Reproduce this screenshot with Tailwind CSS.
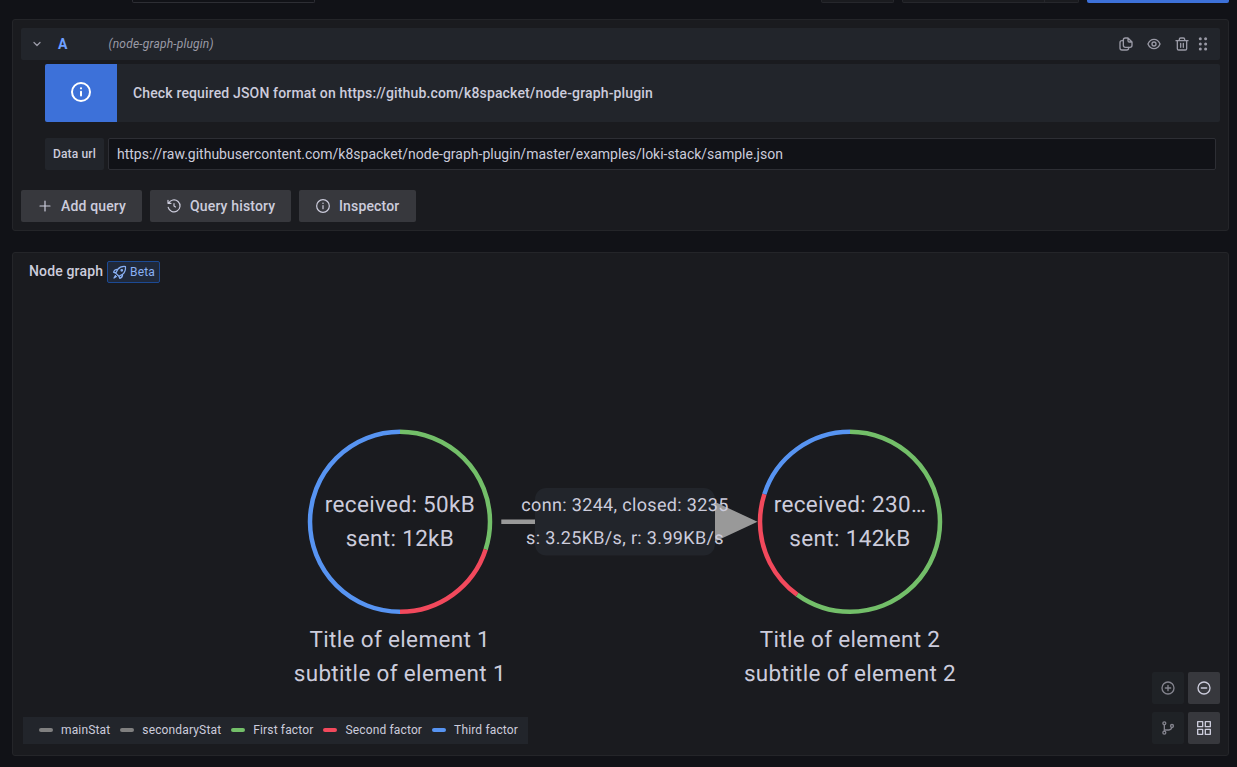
<!DOCTYPE html>
<html lang="en">
<head>
<meta charset="utf-8">
<title>Node graph</title>
<script src="https://cdn.jsdelivr.net/npm/@tailwindcss/browser@4"></script>
</head>
<body class="h-[767px] w-[1237px] overflow-hidden bg-[#111217] font-[Roboto,sans-serif] text-[14px] leading-[22px] tracking-[0.15px] text-[#ccccdc] antialiased">
<div class="flex h-full flex-col pr-[8px] pl-[12px]">
  <header class="flex h-[3px] shrink-0">
    <div class="ml-[120px] w-[183px] rounded-b-[2px] border border-t-0 border-[#2d2e34] bg-[#111217]"></div>
    <div class="ml-auto w-[73px] rounded-b-[2px] border border-t-0 border-[#26272c] bg-[#1a1b1f]"></div>
    <div class="ml-[8px] flex w-[177px] rounded-b-[2px] border border-t-0 border-[#26272c] bg-[#1a1b1f]"><div class="w-[142px] border-r border-[#26272c]"></div></div>
    <div class="ml-[8px] w-[142px] rounded-b-[2px] bg-[#3d71d9]"></div>
  </header>

  <section class="mt-[16px] flex h-[212px] shrink-0 flex-col rounded-[3px] border border-[#242529] bg-[#1a1b1f] px-[8px] pt-[8px]">
    <div class="flex h-[32px] items-center rounded-[2px] bg-[#22252b] pr-[9px] pl-[8px] text-[#9a9aa6]">
      <svg class="size-4" viewBox="0 0 16 16" fill="none" stroke="currentColor" stroke-width="1.3" stroke-linecap="round" stroke-linejoin="round"><path d="M5 6.5l3 3 3-3"/></svg>
      <span class="ml-[13px] font-bold text-[#6e9fff]">A</span>
      <span class="ml-[41px] text-[12px] tracking-[0.2px] italic">(node-graph-plugin)</span>
      <div class="ml-auto flex items-center">
        <svg class="size-4" viewBox="0 0 24 24" fill="none" stroke="currentColor" stroke-width="2" stroke-linejoin="round" stroke-linecap="round"><path d="M15 3h-4a3 3 0 0 0-3 3v8a3 3 0 0 0 3 3h7a3 3 0 0 0 3-3V9zM15 3v4a2 2 0 0 0 2 2h4"/><path d="M8 7H6a3 3 0 0 0-3 3v8a3 3 0 0 0 3 3h7a3 3 0 0 0 3-3v-1"/></svg>
        <svg class="ml-[12px] size-4" viewBox="0 0 24 24" fill="none" stroke="currentColor" stroke-width="2"><path d="M3.100 11.600C5 7.300 8.300 5 12 5s7 2.300 8.900 6.600a1 1 0 0 1 0 .8C19 16.700 15.700 19 12 19s-7-2.300-8.900-6.600a1 1 0 0 1 0-.8z"/><circle cx="12" cy="12" r="3"/></svg>
        <svg class="ml-[12px] size-4" viewBox="0 0 24 24" fill="none" stroke="currentColor" stroke-width="2" stroke-linecap="round" stroke-linejoin="round"><path d="M3 7h18M8 7V5a2 2 0 0 1 2-2h4a2 2 0 0 1 2 2v2M5 7v12a2 2 0 0 0 2 2h10a2 2 0 0 0 2-2V7M10 11v6M14 11v6"/></svg>
        <svg class="ml-[5px] size-4" viewBox="0 0 16 16" fill="currentColor"><circle cx="5.300" cy="2.700" r="1.500"/><circle cx="10.600" cy="2.700" r="1.500"/><circle cx="5.300" cy="7.900" r="1.500"/><circle cx="10.600" cy="7.900" r="1.500"/><circle cx="5.300" cy="13.100" r="1.500"/><circle cx="10.600" cy="13.100" r="1.500"/></svg>
      </div>
    </div>

    <div class="mt-[4px] ml-[24px] flex h-[58px] items-center overflow-hidden rounded-[2px] bg-[#22252b]">
      <div class="flex h-full w-[72px] items-center justify-center bg-[#3d71d9] text-white">
        <svg class="mb-[2px] size-6" viewBox="0 0 24 24" fill="none" stroke="currentColor" stroke-width="2" stroke-linecap="round"><circle cx="12" cy="12" r="9"/><path d="M12 11.800v3.700"/><circle cx="12" cy="8.300" r="1.100" fill="currentColor" stroke="none"/></svg>
      </div>
      <span class="ml-[16px] font-medium">Check required JSON format on https://github.com/k8spacket/node-graph-plugin</span>
    </div>

    <div class="mt-[16px] mr-[4px] ml-[24px] flex h-[32px] gap-[4px]">
      <label class="flex w-[59px] items-center rounded-[2px] bg-[#22252b] pl-[8px] text-[12px] font-medium whitespace-nowrap">Data url</label>
      <div class="flex flex-1 items-center rounded-[2px] border border-[#2d2e34] bg-[#111217] pl-[8px] tracking-normal">https://raw.githubusercontent.com/k8spacket/node-graph-plugin/master/examples/loki-stack/sample.json</div>
    </div>

    <div class="mt-[20px] flex h-[32px] gap-[8px] font-medium">
      <button class="flex w-[121px] items-center rounded-[2px] bg-[#37383d] pl-[16px]">
        <svg class="mr-[8px] size-4" viewBox="0 0 16 16" stroke="currentColor" stroke-width="1.200" stroke-linecap="round"><path d="M8 3v10M3 8h10"/></svg>Add query</button>
      <button class="flex w-[141px] items-center rounded-[2px] bg-[#37383d] pl-[16px]">
        <svg class="mr-[8px] size-4" viewBox="0 0 24 24" fill="none" stroke="currentColor" stroke-width="1.800" stroke-linecap="round" stroke-linejoin="round"><path d="M3 3.500V8h4.500M3.900 8a9 9 0 1 1-.6 6M12 8.500V12l2.200 1.400"/></svg>Query history</button>
      <button class="flex w-[117px] items-center rounded-[2px] bg-[#37383d] pl-[16px]">
        <svg class="mr-[8px] size-4" viewBox="0 0 24 24" fill="none" stroke="currentColor" stroke-width="1.800" stroke-linecap="round"><circle cx="12" cy="12" r="9.500"/><path d="M12 11.500v4.500"/><circle cx="12" cy="8" r="1.100" fill="currentColor" stroke="none"/></svg>Inspector</button>
    </div>
  </section>

  <section class="relative mt-[21px] h-[504px] shrink-0 rounded-[3px] border border-[#242529] bg-[#1a1b1f]">
    <div class="flex items-center pt-[7px] pl-[16px]">
      <h2 class="mb-[2px] font-medium">Node graph</h2>
      <span class="ml-[4px] flex h-[22px] w-[53px] items-center rounded-[2px] border border-[#1c4a94] bg-[#20293a] pl-[4px] text-[12px] text-[#8ab1f5]">
        <svg class="mr-[3px] size-[15px]" viewBox="0 0 24 24" fill="none" stroke="currentColor" stroke-width="2" stroke-linecap="round" stroke-linejoin="round"><path d="M21.500 2.500c-5.500-.6-9.500 1-12.300 4.600L6 13l5 5 5.900-3.200c3.600-2.800 5.200-6.800 4.600-12.300zM9.200 7.100c-3.500-.3-5.400 1-6.700 4.300L6 13M16.900 14.800c.3 3.500-1 5.400-4.300 6.700L11 18M5.500 17l-2.300 3.800L7 18.500"/><circle cx="15.600" cy="8.400" r="1.200"/></svg>Beta</span>
    </div>

    <svg class="absolute top-0 left-0 h-[502px] w-[1215px]" viewBox="13 253 1215 502" text-anchor="middle" text-rendering="geometricPrecision" fill="#ccccdc" font-size="22.500" letter-spacing=".3375">
      <g fill="none" stroke-width="4.500">
        <g transform="rotate(-90 400 521.800)">
          <circle cx="400" cy="521.800" r="90" pathLength="100" stroke="#73bf69" stroke-dasharray="30 70"/>
          <circle cx="400" cy="521.800" r="90" pathLength="100" stroke="#f2495c" stroke-dasharray="20 80" stroke-dashoffset="-30"/>
          <circle cx="400" cy="521.800" r="90" pathLength="100" stroke="#5794f2" stroke-dasharray="50 50" stroke-dashoffset="-50"/>
        </g>
        <g transform="rotate(-90 850 521.800)">
          <circle cx="850" cy="521.800" r="90" pathLength="100" stroke="#73bf69" stroke-dasharray="60 40"/>
          <circle cx="850" cy="521.800" r="90" pathLength="100" stroke="#f2495c" stroke-dasharray="20 80" stroke-dashoffset="-60"/>
          <circle cx="850" cy="521.800" r="90" pathLength="100" stroke="#5794f2" stroke-dasharray="20 80" stroke-dashoffset="-80"/>
        </g>
      </g>
      <path d="M501.300 519.500H713V501L757.500 521.800 713 542.500V524H501.300z" fill="#999999"/>
      <rect x="535" y="488" width="180" height="67.500" rx="11.250" fill="#22252b"/>
      <g font-size="18">
        <text x="625" y="510.700">conn: 3244, closed: 3235</text>
        <text x="625" y="544.300">s: 3.25KB/s, r: 3.99KB/s</text>
      </g>
      <text x="400" y="512.400">received: 50kB</text>
      <text x="400" y="546.400">sent: 12kB</text>
      <text x="399.800" y="647.400">Title of element 1</text>
      <text x="399.800" y="681.400">subtitle of element 1</text>
      <text x="850" y="512.400">received: 230…</text>
      <text x="850" y="546.400">sent: 142kB</text>
      <text x="850" y="647.400">Title of element 2</text>
      <text x="850" y="681.400">subtitle of element 2</text>
    </svg>

    <div class="absolute bottom-[11px] left-[10px] flex h-[27px] w-[505px] items-center bg-[#22252b] pb-[2px] pl-[16px] text-[12px]">
      <span class="mr-[8px] h-[4px] w-[14px] rounded-[2px] bg-[#808080]"></span>mainStat
      <span class="mr-[8px] ml-[10px] h-[4px] w-[14px] rounded-[2px] bg-[#808080]"></span>secondaryStat
      <span class="mr-[8px] ml-[10px] h-[4px] w-[14px] rounded-[2px] bg-[#73bf69]"></span>First factor
      <span class="mr-[8px] ml-[10px] h-[4px] w-[14px] rounded-[2px] bg-[#f2495c]"></span>Second factor
      <span class="mr-[8px] ml-[10px] h-[4px] w-[14px] rounded-[2px] bg-[#5794f2]"></span>Third factor
    </div>

    <div class="absolute right-[8px] bottom-[11px] grid grid-cols-[32px_32px] grid-rows-[32px_32px] gap-x-[4px] gap-y-[8px]">
      <button class="flex items-center justify-center rounded-[2px] bg-[#1f2226] text-[#84848e]"><svg class="size-4" viewBox="0 0 24 24" fill="none" stroke="currentColor" stroke-width="2" stroke-linecap="round"><circle cx="12" cy="12" r="9"/><path d="M12 8v8M8 12h8"/></svg></button>
      <button class="flex items-center justify-center rounded-[2px] bg-[#37383d]"><svg class="size-4" viewBox="0 0 24 24" fill="none" stroke="currentColor" stroke-width="2" stroke-linecap="round"><circle cx="12" cy="12" r="9"/><path d="M8 12h8"/></svg></button>
      <button class="flex items-center justify-center rounded-[2px] bg-[#1f2226] text-[#84848e]"><svg class="size-4" viewBox="0 0 24 24" fill="none" stroke="currentColor" stroke-width="2" stroke-linecap="round"><circle cx="6.500" cy="5" r="2.200"/><circle cx="6.500" cy="19" r="2.200"/><circle cx="18" cy="9" r="2.200"/><path d="M6.500 7.200v9.600M6.500 15h7c2.500 0 3.700-1.500 4.200-3.800"/></svg></button>
      <button class="flex items-center justify-center rounded-[2px] bg-[#37383d]"><svg class="size-4" viewBox="0 0 24 24" fill="none" stroke="currentColor" stroke-width="2" stroke-linejoin="round"><path d="M2.500 2.500h7.500v7.500H2.500zM14 2.500h7.500v7.500H14zM2.500 14h7.500v7.500H2.500zM14 14h7.500v7.500H14z"/></svg></button>
    </div>
  </section>
</div>
</body>
</html>
